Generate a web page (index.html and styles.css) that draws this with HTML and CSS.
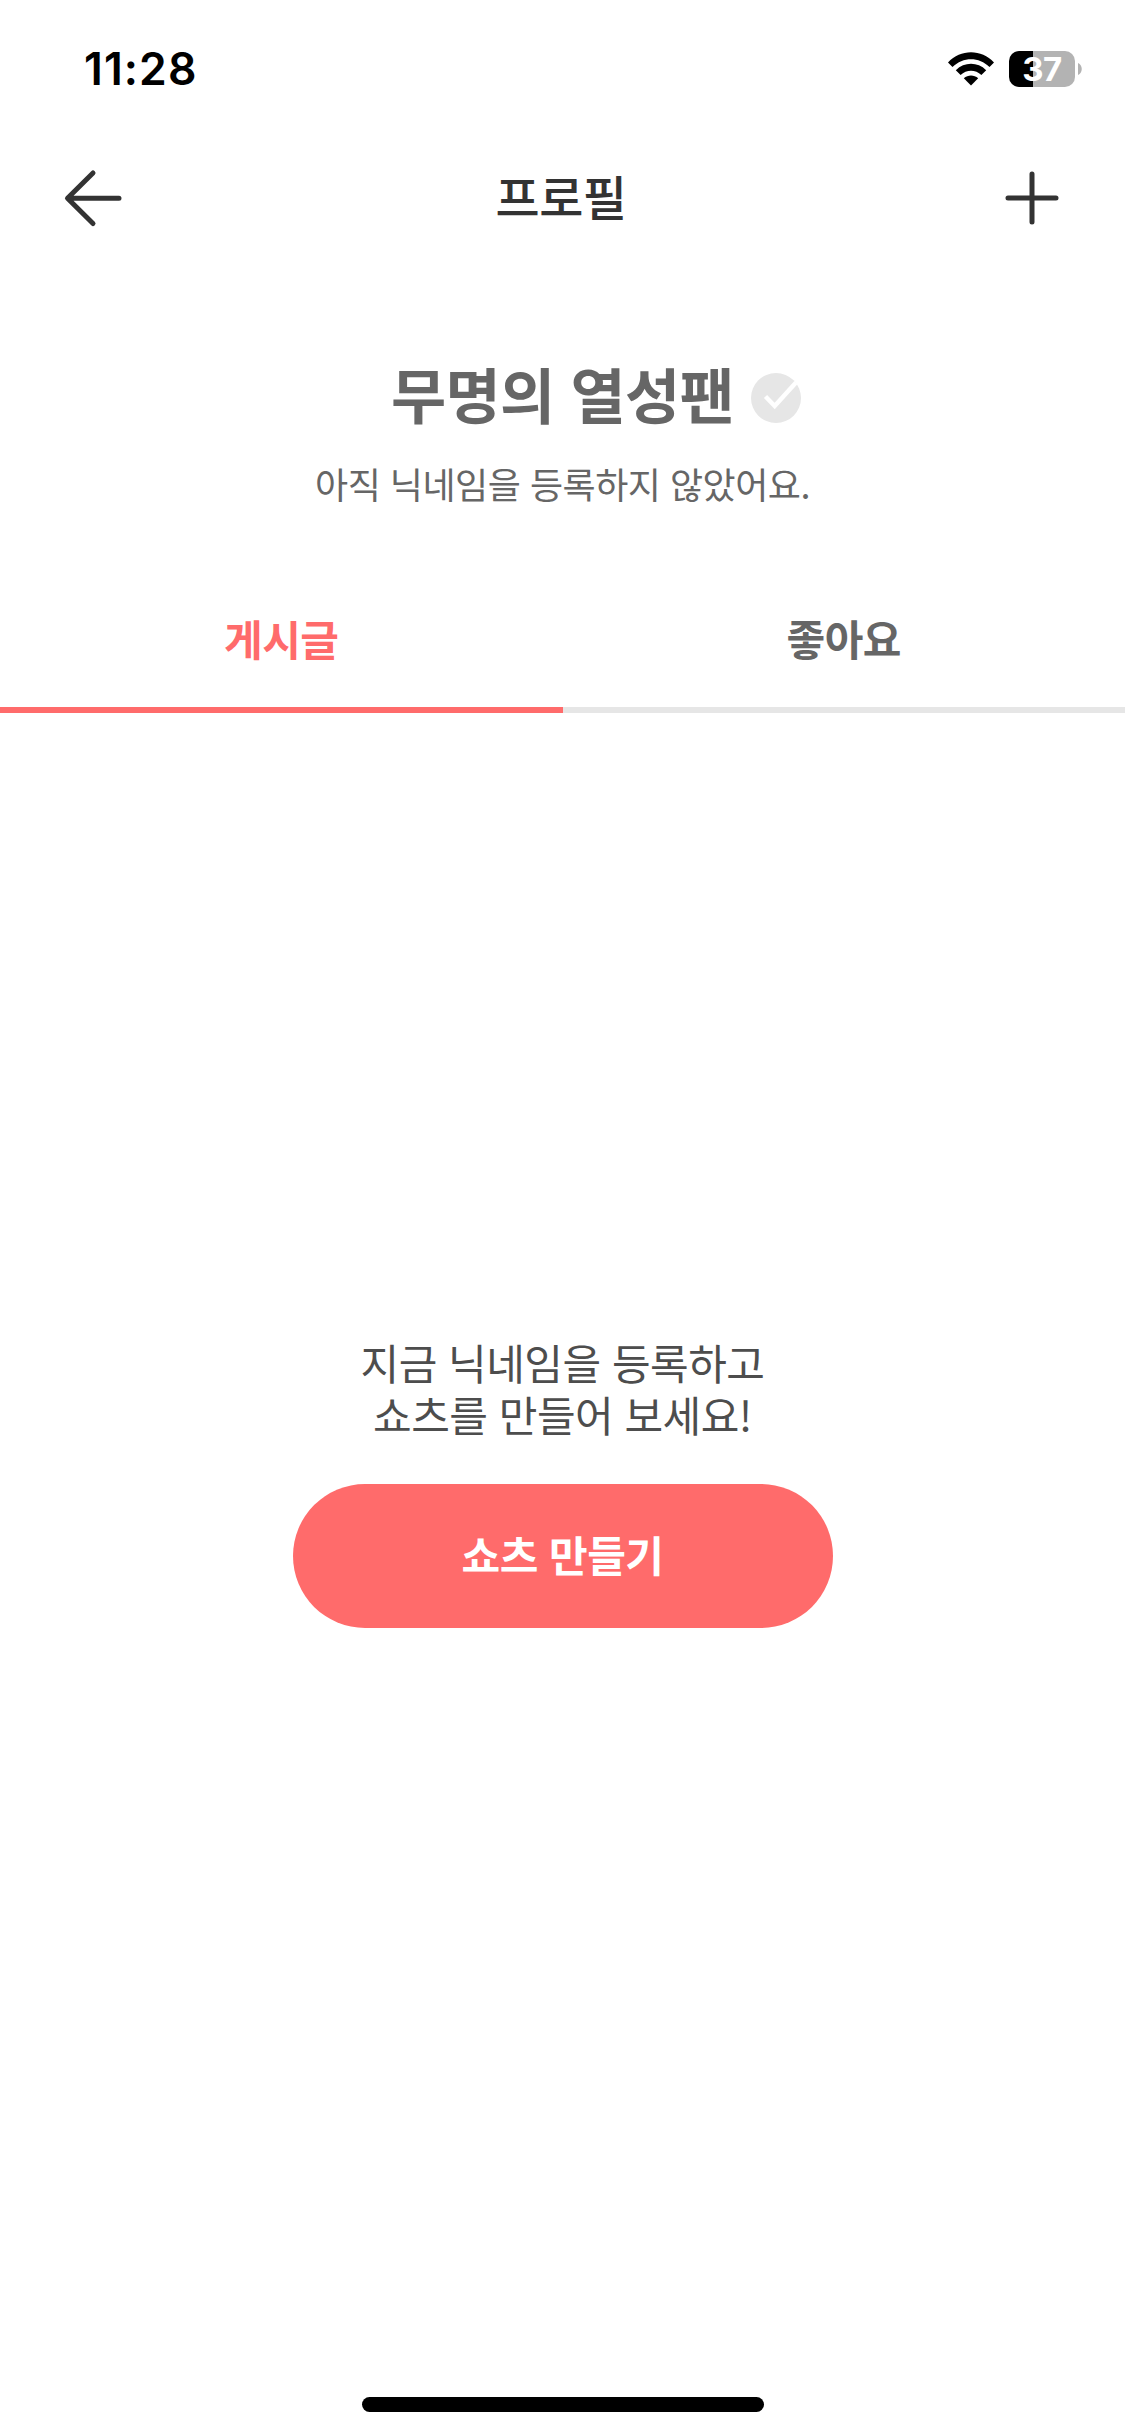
FILE: index.html
```html
<!DOCTYPE html>
<html lang="ko">
<head>
<meta charset="utf-8">
<title>프로필</title>
<link rel="stylesheet" href="styles.css">
</head>
<body>
<div class="screen">
  <div class="status">
    <span class="time">11:28</span>
    <div class="indicators">
      <svg class="wifi" width="46" height="34" viewBox="0 0 46 34">
        <path d="M0 10.500C12.500-3.200 33.500-3.200 46 10.500L41.500 15C31 4.500 15 4.500 4.500 15Z"/>
        <path d="M7.800 18.200C16.500 9.700 29.500 9.700 38.200 18.200L33.400 23C27.500 17.200 18.500 17.200 12.600 23Z"/>
        <path d="M15.800 26.200C20 22.500 26 22.500 30.200 26.200L23 33.500Z"/>
      </svg>
      <div class="battery">
        <span class="level">37</span>
        <svg class="terminal" width="4" height="12" viewBox="0 0 4 12"><path d="M0 0C5 2 5 10 0 12Z"/></svg>
      </div>
    </div>
  </div>
  <header class="header">
    <svg class="icon" width="60" height="60" viewBox="0 0 60 60"><path d="M57 30.300H6M31 5L5.500 30.300L31 55.500"/></svg>
    <h1 class="heading">프로필</h1>
    <svg class="icon" width="60" height="60" viewBox="0 0 60 60"><path d="M8 30H56M32 6V54"/></svg>
  </header>
  <section class="profile">
    <div class="name-row">
      <h2 class="name">무명의 열성팬</h2>
      <svg class="badge" width="50" height="50" viewBox="0 0 50 50"><circle cx="25" cy="25" r="25"/><path d="M14.500 23.500L23.700 33L45 9.500"/></svg>
    </div>
    <p class="note">아직 닉네임을 등록하지 않았어요.</p>
  </section>
  <nav class="tabs">
    <div class="tab tab-active">게시글</div>
    <div class="tab">좋아요</div>
  </nav>
  <main class="empty">
    <p class="message">지금 닉네임을 등록하고<br>쇼츠를 만들어 보세요!</p>
    <button class="create">쇼츠 만들기</button>
  </main>
  <div class="home-bar"></div>
</div>
</body>
</html>
```
FILE: styles.css
```css
* { box-sizing: border-box; }
body {
  margin: 0;
  background: #fff;
  font-family: "Noto Sans CJK KR", sans-serif;
}
h1, h2, p { margin: 0; }
.screen {
  display: flex;
  flex-direction: column;
  align-items: stretch;
  width: 1125px;
  height: 2436px;
  padding-bottom: 24px;
}
.status {
  display: flex;
  justify-content: space-between;
  align-items: center;
  height: 138px;
  padding: 0 43px 0 84px;
}
.time {
  font: 600 44.500px/60px Inter, sans-serif;
  letter-spacing: 1.100px;
  color: #000;
}
.indicators { display: flex; align-items: center; gap: 15px; }
.battery { display: flex; align-items: center; gap: 3px; }
.level {
  width: 66px;
  height: 36px;
  border-radius: 10px;
  background: linear-gradient(to right, #000 24px, #b3b3b3 24px);
  color: #fff;
  font: 700 33px/36px Inter, sans-serif;
  letter-spacing: -0.500px;
  text-align: center;
}
.terminal { fill: #b3b3b3; }
.header {
  display: flex;
  justify-content: space-between;
  align-items: center;
  height: 120px;
  padding: 0 65px 0 62px;
}
.icon {
  fill: none;
  stroke: #333;
  stroke-width: 5;
  stroke-linecap: round;
  stroke-linejoin: round;
}
.heading {
  padding-bottom: 6px;
  font-size: 48px;
  font-weight: 500;
  line-height: 60px;
  letter-spacing: -0.500px;
  color: #333;
}
.profile { padding-top: 100px; color: #666; text-align: center; }
.name-row {
  display: grid;
  grid-template-columns: 1fr auto 1fr;
  column-gap: 17px;
  align-items: center;
}
.name {
  grid-column: 2;
  font-size: 60px;
  font-weight: 700;
  line-height: 70px;
  letter-spacing: -0.700px;
}
.badge { margin-top: 10px; fill: #e6e6e6; }
.badge path { fill: none; stroke: #fff; stroke-width: 4.500; }
.note {
  padding-top: 31px;
  font-size: 36px;
  line-height: 49px;
  letter-spacing: -0.500px;
}
.tabs { display: flex; height: 143px; margin-top: 62px; }
.tab {
  flex: 1;
  border-bottom: 6px solid #e6e6e6;
  color: #666;
  font-size: 42px;
  font-weight: 700;
  line-height: 136px;
  letter-spacing: -0.500px;
  text-align: center;
}
.tab-active { color: #ff6b6b; border-color: #ff6b6b; }
.empty {
  flex: 1;
  display: flex;
  flex-direction: column;
  align-items: center;
  gap: 44px;
  padding-top: 623px;
}
.message {
  font-size: 42px;
  line-height: 52px;
  letter-spacing: -0.500px;
  color: #4d4d4d;
  text-align: center;
}
.create {
  width: 540px;
  height: 144px;
  padding: 0 0 5px;
  border: 0;
  border-radius: 72px;
  background: #ff6b6b;
  color: #fff;
  font: 700 42px/60px "Noto Sans CJK KR", sans-serif;
  letter-spacing: -0.500px;
}
.home-bar {
  align-self: center;
  width: 402px;
  height: 15px;
  border-radius: 8px;
  background: #000;
}
```
